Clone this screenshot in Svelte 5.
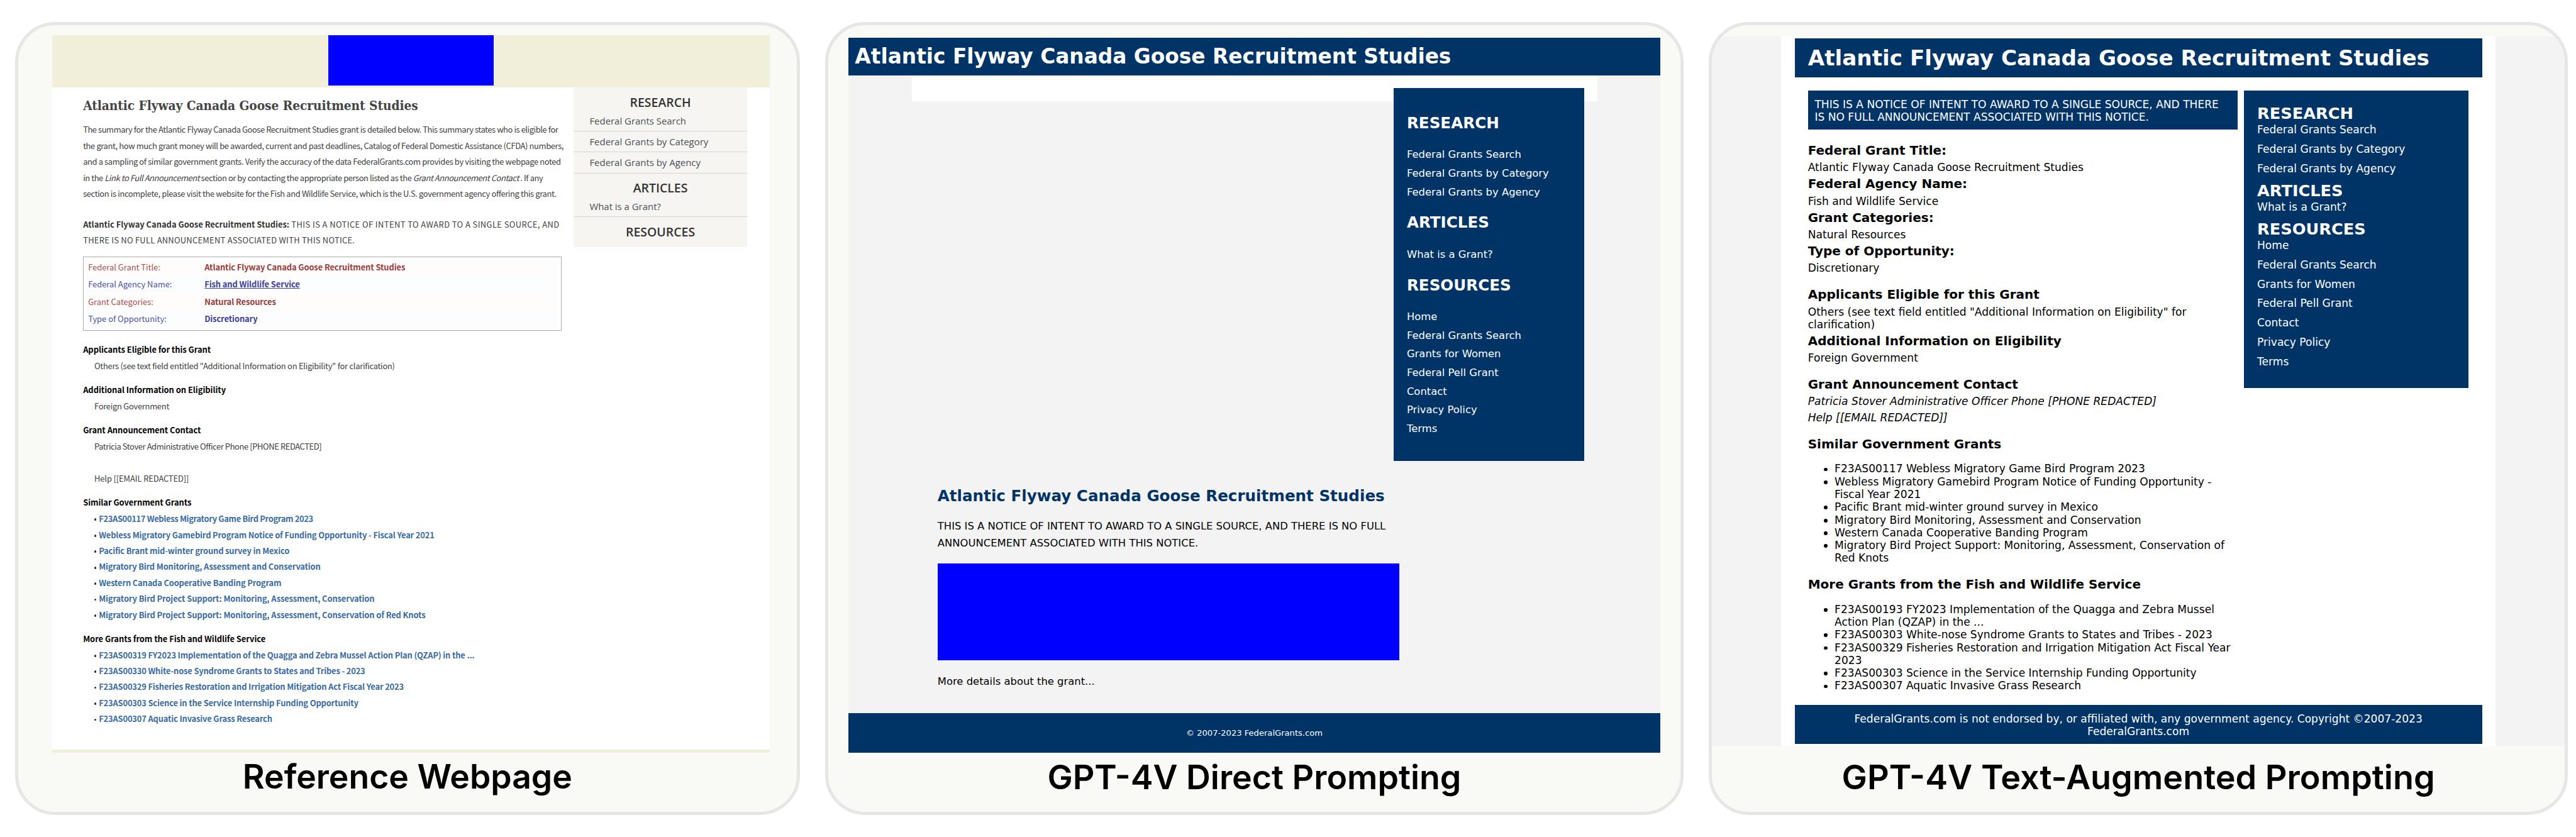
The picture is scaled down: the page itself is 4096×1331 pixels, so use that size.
<script>
  const facts = [
    ['Federal Grant Title:', 'Atlantic Flyway Canada Goose Recruitment Studies'],
    ['Federal Agency Name:', 'Fish and Wildlife Service'],
    ['Grant Categories:', 'Natural Resources'],
    ['Type of Opportunity:', 'Discretionary'],
  ];

  const research = ['Federal Grants Search', 'Federal Grants by Category', 'Federal Grants by Agency'];
  const resources = ['Home', 'Federal Grants Search', 'Grants for Women', 'Federal Pell Grant', 'Contact', 'Privacy Policy', 'Terms'];
  const menu = [
    ['RESEARCH', research],
    ['ARTICLES', ['What is a Grant?']],
    ['RESOURCES', resources],
  ];

  const similar = [
    'F23AS00117 Webless Migratory Game Bird Program 2023',
    'Webless Migratory Gamebird Program Notice of Funding Opportunity - Fiscal Year 2021',
    'Pacific Brant mid-winter ground survey in Mexico',
    'Migratory Bird Monitoring, Assessment and Conservation',
    'Western Canada Cooperative Banding Program',
    'Migratory Bird Project Support: Monitoring, Assessment, Conservation',
    'Migratory Bird Project Support: Monitoring, Assessment, Conservation of Red Knots',
  ];
  const more = [
    'F23AS00319 FY2023 Implementation of the Quagga and Zebra Mussel Action Plan (QZAP) in the ...',
    'F23AS00330 White-nose Syndrome Grants to States and Tribes - 2023',
    'F23AS00329 Fisheries Restoration and Irrigation Mitigation Act Fiscal Year 2023',
    'F23AS00303 Science in the Service Internship Funding Opportunity',
    'F23AS00307 Aquatic Invasive Grass Research',
  ];

  // Each entry is a list of lines, broken where the column wraps.
  const similarWrapped = [
    ['F23AS00117 Webless Migratory Game Bird Program 2023'],
    ['Webless Migratory Gamebird Program Notice of Funding Opportunity -', 'Fiscal Year 2021'],
    ['Pacific Brant mid-winter ground survey in Mexico'],
    ['Migratory Bird Monitoring, Assessment and Conservation'],
    ['Western Canada Cooperative Banding Program'],
    ['Migratory Bird Project Support: Monitoring, Assessment, Conservation of', 'Red Knots'],
  ];
  const moreWrapped = [
    ['F23AS00193 FY2023 Implementation of the Quagga and Zebra Mussel', 'Action Plan (QZAP) in the ...'],
    ['F23AS00303 White-nose Syndrome Grants to States and Tribes - 2023'],
    ['F23AS00329 Fisheries Restoration and Irrigation Mitigation Act Fiscal Year', '2023'],
    ['F23AS00303 Science in the Service Internship Funding Opportunity'],
    ['F23AS00307 Aquatic Invasive Grass Research'],
  ];
</script>

{#snippet wrapped(items)}
  <ul>
    {#each items as lines}
      <li>
        {#each lines as line}<span class="line">{line}</span>{/each}
      </li>
    {/each}
  </ul>
{/snippet}

<div class="figure">
  <section class="panel first">
    <div class="page original">
      <header><div class="banner"></div></header>
      <div class="columns">
        <main>
          <h1>Atlantic Flyway Canada Goose Recruitment Studies</h1>
          <p class="intro">
            <span class="line tight">The summary for the Atlantic Flyway Canada Goose Recruitment Studies grant is detailed below. This summary states who is eligible for</span>
            <span class="line">the grant, how much grant money will be awarded, current and past deadlines, Catalog of Federal Domestic Assistance (CFDA) numbers,</span>
            <span class="line">and a sampling of similar government grants. Verify the accuracy of the data FederalGrants.com provides by visiting the webpage noted</span>
            <span class="line tight">in the <em>Link to Full Announcement</em> section or by contacting the appropriate person listed as the <em>Grant Announcement Contact</em> . If any</span>
            <span class="line">section is incomplete, please visit the website for the Fish and Wildlife Service, which is the U.S. government agency offering this grant.</span>
          </p>
          <p class="notice">
            <span class="line wide"><b>Atlantic Flyway Canada Goose Recruitment Studies:</b> THIS IS A NOTICE OF INTENT TO AWARD TO A SINGLE SOURCE, AND</span>
            <span class="line">THERE IS NO FULL ANNOUNCEMENT ASSOCIATED WITH THIS NOTICE.</span>
          </p>
          <dl>
            {#each facts as [label, value]}
              <div class="fact"><dt>{label}</dt><dd>{value}</dd></div>
            {/each}
          </dl>
          <h2>Applicants Eligible for this Grant</h2>
          <p class="detail">Others (see text field entitled "Additional Information on Eligibility" for clarification)</p>
          <h2>Additional Information on Eligibility</h2>
          <p class="detail">Foreign Government</p>
          <h2>Grant Announcement Contact</h2>
          <p class="detail contact">Patricia Stover Administrative Officer Phone [PHONE REDACTED]</p>
          <p class="detail help">Help [[EMAIL REDACTED]]</p>
          <h2>Similar Government Grants</h2>
          <ul class="similar">
            {#each similar as item}<li>{item}</li>{/each}
          </ul>
          <h2>More Grants from the Fish and Wildlife Service</h2>
          <ul>
            {#each more as item}<li>{item}</li>{/each}
          </ul>
        </main>
        <aside>
          <h3>RESEARCH</h3>
          {#each research as item}<div class="entry">{item}</div>{/each}
          <h3>ARTICLES</h3>
          <div class="entry">What is a Grant?</div>
          <h3>RESOURCES</h3>
        </aside>
      </div>
    </div>
    <div class="caption">Reference Webpage</div>
  </section>

  <section class="panel second">
    <div class="page direct">
      <header>Atlantic Flyway Canada Goose Recruitment Studies</header>
      <div class="strip">
        <nav>
          {#each menu as [title, items]}
            <h3>{title}</h3>
            <ul>
              {#each items as item}<li>{item}</li>{/each}
            </ul>
          {/each}
        </nav>
      </div>
      <main>
        <h2>Atlantic Flyway Canada Goose Recruitment Studies</h2>
        <p>
          <span class="line">THIS IS A NOTICE OF INTENT TO AWARD TO A SINGLE SOURCE, AND THERE IS NO FULL</span>
          <span class="line">ANNOUNCEMENT ASSOCIATED WITH THIS NOTICE.</span>
        </p>
        <div class="image"></div>
        <p>More details about the grant...</p>
      </main>
      <footer>© 2007-2023 FederalGrants.com</footer>
    </div>
    <div class="caption">GPT-4V Direct Prompting</div>
  </section>

  <section class="panel third">
    <div class="page augmented">
      <div class="sheet">
        <header>Atlantic Flyway Canada Goose Recruitment Studies</header>
        <div class="columns">
          <main>
            <div class="alert">
              <span class="line">THIS IS A NOTICE OF INTENT TO AWARD TO A SINGLE SOURCE, AND THERE</span>
              <span class="line">IS NO FULL ANNOUNCEMENT ASSOCIATED WITH THIS NOTICE.</span>
            </div>
            <section>
              {#each facts as [label, value]}
                <h3>{label}</h3>
                <p>{value}</p>
              {/each}
            </section>
            <section>
              <h3>Applicants Eligible for this Grant</h3>
              <p>
                <span class="line">Others (see text field entitled "Additional Information on Eligibility" for</span>
                <span class="line">clarification)</span>
              </p>
              <h3>Additional Information on Eligibility</h3>
              <p>Foreign Government</p>
            </section>
            <section>
              <h3>Grant Announcement Contact</h3>
              <p><em>Patricia Stover Administrative Officer Phone [PHONE REDACTED]</em></p>
              <p><em>Help [[EMAIL REDACTED]]</em></p>
            </section>
            <section>
              <h3>Similar Government Grants</h3>
              {@render wrapped(similarWrapped)}
            </section>
            <section>
              <h3>More Grants from the Fish and Wildlife Service</h3>
              {@render wrapped(moreWrapped)}
            </section>
          </main>
          <nav>
            {#each menu as [title, items]}
              <h3>{title}</h3>
              <ul>
                {#each items as item}<li>{item}</li>{/each}
              </ul>
            {/each}
          </nav>
        </div>
        <footer>
          <span class="line">FederalGrants.com is not endorsed by, or affiliated with, any government agency. Copyright ©2007-2023</span>
          <span class="line">FederalGrants.com</span>
        </footer>
      </div>
    </div>
    <div class="caption">GPT-4V Text-Augmented Prompting</div>
  </section>
</div>

<style>
  :global(body) { margin: 0; background: #fff; overflow: hidden; }

  .figure {
    zoom: 0.96376;
    display: flex;
    width: 4250px;
    height: 1381px;
    padding-top: 36px;
    box-sizing: border-box;
    white-space: nowrap;
    background: #fff;
  }
  h1, h2, h3, p, ul, dl, dd { margin: 0; padding: 0; }
  ul { list-style: none; }
  .line { display: block; }

  .panel {
    box-sizing: border-box;
    height: 1308.3px;
    border: 5.5px solid #e6e6e4;
    border-radius: 66px;
    background: #f9faf5;
    overflow: hidden;
    flex: none;
    display: flex;
    flex-direction: column;
    align-items: center;
  }
  .first { margin-left: 24.5px; width: 1295.5px; padding-top: 16.5px; }
  .second { margin-left: 41px; width: 1417px; padding-top: 21.5px; }
  .third { margin-left: 41px; width: 1418px; padding-top: 19.5px; }

  .page { flex: none; }
  .caption {
    font: 600 55.5px/60px Inter, sans-serif;
    color: #000;
    margin-top: 9.5px;
  }
  .second .caption { margin-top: 11px; font-size: 55.75px; }
  .third .caption { margin-top: 22px; font-size: 55.95px; }

  /* Original page */
  .original {
    width: 1183.7px;
    height: 1184px;
    margin-left: 12px;
    box-sizing: border-box;
    background: #fff;
    border-bottom: 6px solid #f1eed9;
    font: 13.4px/26.5px "Noto Sans CJK SC", sans-serif;
    color: #404040;
  }
  .original header { height: 87px; background: #f1eed9; }
  .banner { width: 272.7px; height: 83.5px; margin-left: 455.5px; background: #00f; }
  .original .columns { display: flex; }
  .original main { width: 789px; margin-left: 50.7px; padding-top: 15.4px; }
  .original h1 {
    font: bold 21.5px/30px "DejaVu Serif Condensed", "DejaVu Serif", serif;
    font-stretch: condensed;
    letter-spacing: -0.06px;
    color: #444;
  }
  .intro { margin-top: 10.5px; letter-spacing: -0.38px; }
  .tight { letter-spacing: -0.43px; }
  .notice { margin-top: 23.8px; letter-spacing: 0.28px; }
  .wide { letter-spacing: 0.44px; }
  .notice b { color: #333; letter-spacing: 0; }
  dl {
    margin: 13.6px 0 18px;
    border: 1.2px solid #aaa;
    padding: 2px 4px;
    height: 122px;
    box-sizing: border-box;
  }
  .fact { display: flex; height: 28.4px; line-height: 29.8px; padding-left: 3.3px; color: #a65050; background: #fffcfc; }
  .fact:nth-child(even) { color: #5050a8; background: #fbfdff; }
  dt { width: 192px; }
  dd { font-weight: bold; color: #983c3c; letter-spacing: -0.1px; }
  .fact:nth-child(even) dd { color: #40409c; }
  .fact:nth-child(2) dd { text-decoration: underline; }
  .original h2 { font-size: 13.4px; line-height: 26.5px; font-weight: bold; color: #000; margin: 0 0 0.3px; letter-spacing: -0.04px; }
  .detail { padding-left: 18.5px; margin-bottom: 13.2px; letter-spacing: -0.26px; }
  .contact { letter-spacing: -0.4px; }
  .help { margin-top: 26.4px; letter-spacing: -0.1px; }
  .original ul { padding-left: 19px; margin-bottom: 13px; }
  .original li { display: flex; align-items: center; line-height: 26.4px; color: #3a6ca3; font-weight: bold; letter-spacing: -0.17px; }
  .similar li:nth-child(1) { letter-spacing: -0.34px; }
  .similar li:nth-child(n + 6) { letter-spacing: -0.12px; }
  .original li::before { content: ""; width: 3px; height: 4px; border-radius: 2px; background: #333; margin: 3px 4px 0 0; }
  .original aside { width: 287px; height: 263px; margin-left: 20px; background: #f6f5f2; font-family: "Open Sans", sans-serif; }
  .original h3 { font-size: 20.2px; line-height: 31px; height: 38.1px; box-sizing: border-box; padding-top: 8.5px; text-align: center; font-weight: 600; color: #333; }
  .entry {
    font-size: 15.5px;
    line-height: 35px;
    height: 34.4px;
    box-sizing: border-box;
    padding-left: 26.6px;
    border-bottom: 1.5px solid #d3d6d6;
    color: #4a5058;
  }

  /* Page with a full-width header */
  .direct {
    width: 1339px;
    height: 1179px;
    background: #f3f3f3;
    font: 17.02px/27.5px "DejaVu Sans", sans-serif;
    color: #000;
    display: flex;
    flex-direction: column;
  }
  .direct header {
    height: 62px;
    box-sizing: border-box;
    padding-left: 10.5px;
    background: #036;
    color: #fff;
    font-weight: bold;
    font-size: 34.04px;
    line-height: 63.5px;
  }
  .strip { width: 1130.5px; height: 42px; margin-left: 104.7px; padding-top: 21px; box-sizing: border-box; background: #fff; }
  .direct nav { width: 315px; height: 615px; margin-left: 794.4px; padding: 43.1px 0 0 22px; box-sizing: border-box; background: #036; color: #fff; }
  .direct h3 { font-size: 25.53px; line-height: 30px; }
  .direct nav ul { margin: 21.2px 0 20.9px; }
  .direct nav li { line-height: 30.8px; }
  .direct main { margin: 637.3px 0 0 146.9px; flex: 1; }
  .direct h2 { font-size: 25.53px; line-height: 30px; color: #036; }
  .direct p { margin-top: 21.2px; }
  .image { width: 762.3px; height: 160px; margin-top: 19.3px; background: #00f; }
  .image + p { margin-top: 22.2px; }
  .direct footer { height: 65px; background: #036; color: #fff; text-align: center; font-size: 13.6px; line-height: 66px; }

  /* Page with a centred sheet */
  .augmented { width: 100%; height: 1170px; background: #f3f3f3; }
  .sheet {
    width: 1178.2px;
    height: 1170px;
    margin: 0 auto;
    padding: 3px 22px 3.3px;
    box-sizing: border-box;
    background: #fff;
    font: 17.74px/21.05px "DejaVu Sans", sans-serif;
    color: #000;
    display: flex;
    flex-direction: column;
  }
  .sheet header {
    flex: none;
    height: 64.3px;
    padding-left: 22px;
    background: #036;
    color: #fff;
    font-weight: bold;
    font-size: 35.48px;
    line-height: 66.3px;
  }
  .sheet .columns { display: flex; margin: 21.7px 22px 0; flex: 1; }
  .sheet main { width: 709px; margin-right: 10.1px; }
  .alert { height: 64.5px; box-sizing: border-box; padding: 12.2px 11.1px 0; background: #036; color: #fff; }
  .sheet section { margin-top: 21.5px; }
  .sheet .alert + section { margin-top: 22.5px; }
  .sheet main h3 { font-size: 20.75px; line-height: 24px; margin-bottom: 5.5px; }
  .sheet p + h3 { margin-top: 4.7px; }
  .sheet p + p { margin-top: 5.6px; }
  .sheet main ul { margin-top: 17.8px; padding-left: 44px; }
  .sheet main li { position: relative; }
  .sheet main li::before { content: ""; position: absolute; left: -18px; top: 8.5px; width: 6px; height: 6px; border-radius: 50%; background: #000; }
  .sheet nav { width: 371px; height: 491px; padding: 23.1px 0 0 22.1px; box-sizing: border-box; background: #036; color: #fff; }
  .sheet nav h3 { font-size: 26.61px; line-height: 30px; margin-bottom: 1.1px; }
  .sheet nav li { margin-bottom: 11px; }
  .sheet footer { flex: none; height: 64.4px; padding-top: 12.3px; box-sizing: border-box; background: #036; color: #fff; text-align: center; }
</style>
